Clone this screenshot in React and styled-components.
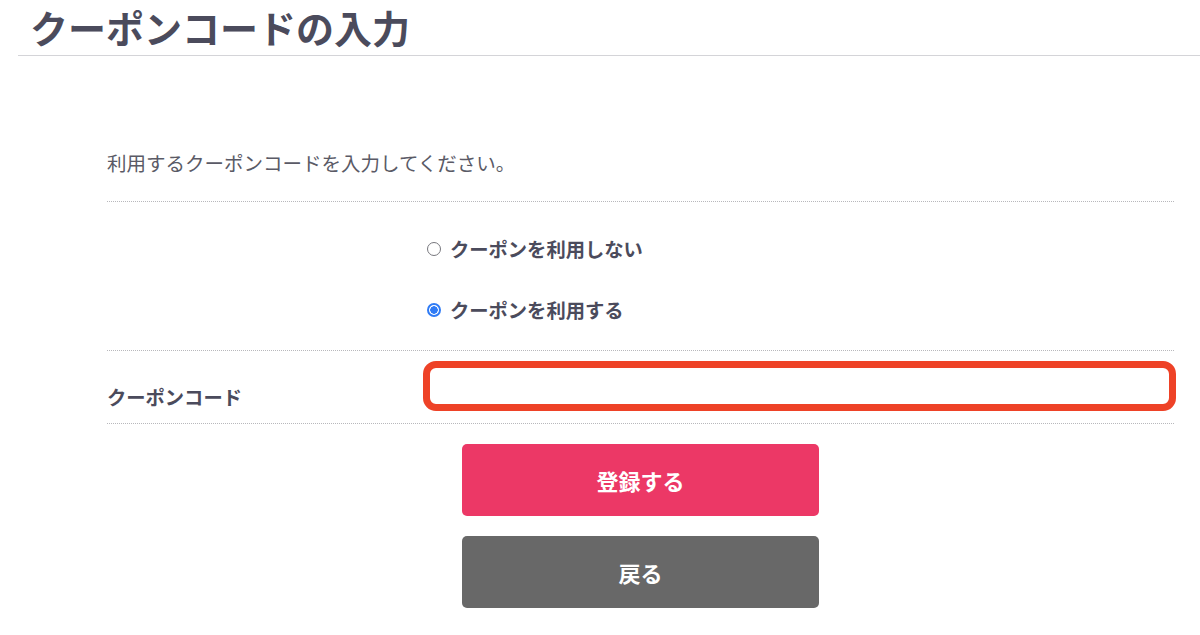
import React, { useState } from "react";
import styled, { createGlobalStyle } from "styled-components";

const GlobalStyle = createGlobalStyle`
body {
  margin: 0;
  background: #fff;
  font-family: "Noto Sans CJK JP", "Noto Sans", sans-serif;
  color: #4b4b5c;
}
`

const Page = styled.div`
width: 1200px;
height: 635px;
overflow: hidden;
`

const Heading = styled.h1`
margin: 0 0 0 18px;
padding: 4px 0 5px 12px;
font-size: 38px;
line-height: 46px;
font-weight: 700;
color: #4b4b5c;
border-bottom: 1px solid #d4d4d8;
`

const Content = styled.div`
margin: 93px 26px 0 107px;
`

const Lead = styled.p`
margin: 0;
padding-bottom: 24px;
font-size: 19.5px;
line-height: 28px;
color: #5a5a66;
border-bottom: 1px dotted #b8b8bc;
`

const Row = styled.div`
display: grid;
grid-template-columns: 316px 1fr;
padding: ${p => p.$pad};
border-bottom: 1px dotted #b8b8bc;
`

const Label = styled.div`
align-self: end;
font-size: 19.3px;
line-height: 28px;
font-weight: 700;
`

const Options = styled.div`
display: flex;
flex-direction: column;
gap: 33px;
padding-left: 4px;
`

const Option = styled.label`
display: flex;
align-items: center;
gap: 9px;
font-size: 19.3px;
line-height: 28px;
font-weight: 700;
cursor: pointer;
`

const Radio = styled.input`
appearance: none;
margin: 0;
width: 14px;
height: 14px;
border-radius: 50%;
border: 1px solid #77777d;
background: #fff;
&:checked {
  border: 2px solid #2f7bf5;
  background: radial-gradient(circle, #2f7bf5 0 3.5px, #fff 4px);
}
`

const CodeInput = styled.input`
box-sizing: border-box;
width: calc(100% + 2px);
height: 50px;
border: 7px solid #ee4227;
border-radius: 13px;
outline: none;
font-size: 18px;
padding: 0 10px;
`

const Actions = styled.div`
display: flex;
flex-direction: column;
align-items: center;
gap: 20px;
padding-top: 20px;
`

const Button = styled.button`
width: 357px;
height: 72px;
border: none;
border-radius: 5px;
background: ${p => p.$bg};
color: #fff;
font-family: inherit;
font-size: 22px;
font-weight: 700;
cursor: pointer;
`

export default function App() {
    const [use, setUse] = useState(true)
    return (
        <Page>
            <GlobalStyle />
            <Heading>クーポンコードの入力</Heading>
            <Content>
                <Lead>利用するクーポンコードを入力してください。</Lead>
                <Row $pad="33px 0 26px">
                    <div />
                    <Options>
                        <Option>
                            <Radio type="radio" name="coupon" checked={!use} onChange={() => setUse(false)} />
                            クーポンを利用しない
                        </Option>
                        <Option>
                            <Radio type="radio" name="coupon" checked={use} onChange={() => setUse(true)} />
                            クーポンを利用する
                        </Option>
                    </Options>
                </Row>
                <Row $pad="10px 0 12px">
                    <Label>クーポンコード</Label>
                    <CodeInput type="text" />
                </Row>
                <Actions>
                    <Button $bg="#ec3866">登録する</Button>
                    <Button $bg="#686868">戻る</Button>
                </Actions>
            </Content>
        </Page>
    )
}
